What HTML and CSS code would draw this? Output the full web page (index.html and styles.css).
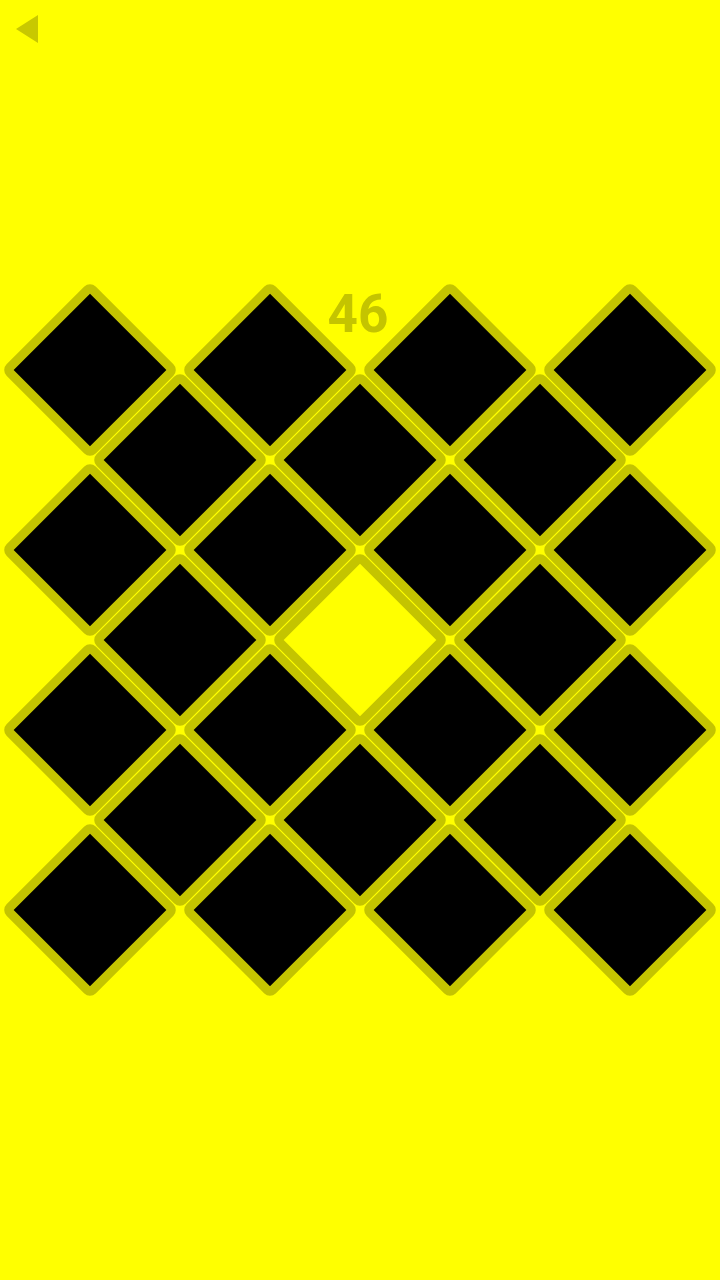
FILE: index.html
```html
<!DOCTYPE html>
<html>
<head>
<meta charset="utf-8">
<link rel="stylesheet" href="styles.css">
</head>
<body>
<div class="page">
  <header class="top">
    <svg class="back" width="22" height="28" viewBox="0 0 22 28"><polygon points="0,14 22,0 22,28" fill="#c8c800"/></svg>
  </header>
  <main class="board">
    <div class="score">46</div>
    <div class="cell r1 c1"><div class="tile"></div></div>
    <div class="cell r1 c3"><div class="tile"></div></div>
    <div class="cell r1 c5"><div class="tile"></div></div>
    <div class="cell r1 c7"><div class="tile"></div></div>
    <div class="cell r2 c2"><div class="tile"></div></div>
    <div class="cell r2 c4"><div class="tile"></div></div>
    <div class="cell r2 c6"><div class="tile"></div></div>
    <div class="cell r3 c1"><div class="tile"></div></div>
    <div class="cell r3 c3"><div class="tile"></div></div>
    <div class="cell r3 c5"><div class="tile"></div></div>
    <div class="cell r3 c7"><div class="tile"></div></div>
    <div class="cell r4 c2"><div class="tile"></div></div>
    <div class="cell r4 c4"><div class="tile empty"></div></div>
    <div class="cell r4 c6"><div class="tile"></div></div>
    <div class="cell r5 c1"><div class="tile"></div></div>
    <div class="cell r5 c3"><div class="tile"></div></div>
    <div class="cell r5 c5"><div class="tile"></div></div>
    <div class="cell r5 c7"><div class="tile"></div></div>
    <div class="cell r6 c2"><div class="tile"></div></div>
    <div class="cell r6 c4"><div class="tile"></div></div>
    <div class="cell r6 c6"><div class="tile"></div></div>
    <div class="cell r7 c1"><div class="tile"></div></div>
    <div class="cell r7 c3"><div class="tile"></div></div>
    <div class="cell r7 c5"><div class="tile"></div></div>
    <div class="cell r7 c7"><div class="tile"></div></div>
  </main>
</div>
</body>
</html>
```

FILE: styles.css
```css
html, body {
  margin: 0;
  padding: 0;
  background: #ffff00;
}
.page {
  width: 720px;
  height: 1280px;
  display: flex;
  flex-direction: column;
  font-family: Roboto, "Liberation Sans", sans-serif;
}
.top {
  height: 60px;
  box-sizing: border-box;
  padding: 15px 0 0 16px;
}
.back {
  display: block;
}
.board {
  margin-top: 220px;
  display: grid;
  grid-template-columns: repeat(8, 90px);
  grid-template-rows: repeat(8, 90px);
}
.score {
  grid-column: 1 / -1;
  grid-row: 1;
  align-self: start;
  margin-top: 8px;
  text-align: center;
  font-size: 53px;
  line-height: 53px;
  font-weight: 700;
  color: #c4c400;
  position: relative;
  z-index: 2;
  padding-right: 4px;
}
.cell {
  display: flex;
  align-items: center;
  justify-content: center;
}
.tile {
  width: 126px;
  height: 126px;
  box-sizing: border-box;
  border: 9px solid #c4c400;
  border-radius: 8px;
  background: #000;
  transform: rotate(45deg);
}
.tile.empty {
  background: #ffff00;
}
.r1 { grid-row: 1 / span 2; }
.r2 { grid-row: 2 / span 2; }
.r3 { grid-row: 3 / span 2; }
.r4 { grid-row: 4 / span 2; }
.r5 { grid-row: 5 / span 2; }
.r6 { grid-row: 6 / span 2; }
.r7 { grid-row: 7 / span 2; }
.c1 { grid-column: 1 / span 2; }
.c2 { grid-column: 2 / span 2; }
.c3 { grid-column: 3 / span 2; }
.c4 { grid-column: 4 / span 2; }
.c5 { grid-column: 5 / span 2; }
.c6 { grid-column: 6 / span 2; }
.c7 { grid-column: 7 / span 2; }
```
